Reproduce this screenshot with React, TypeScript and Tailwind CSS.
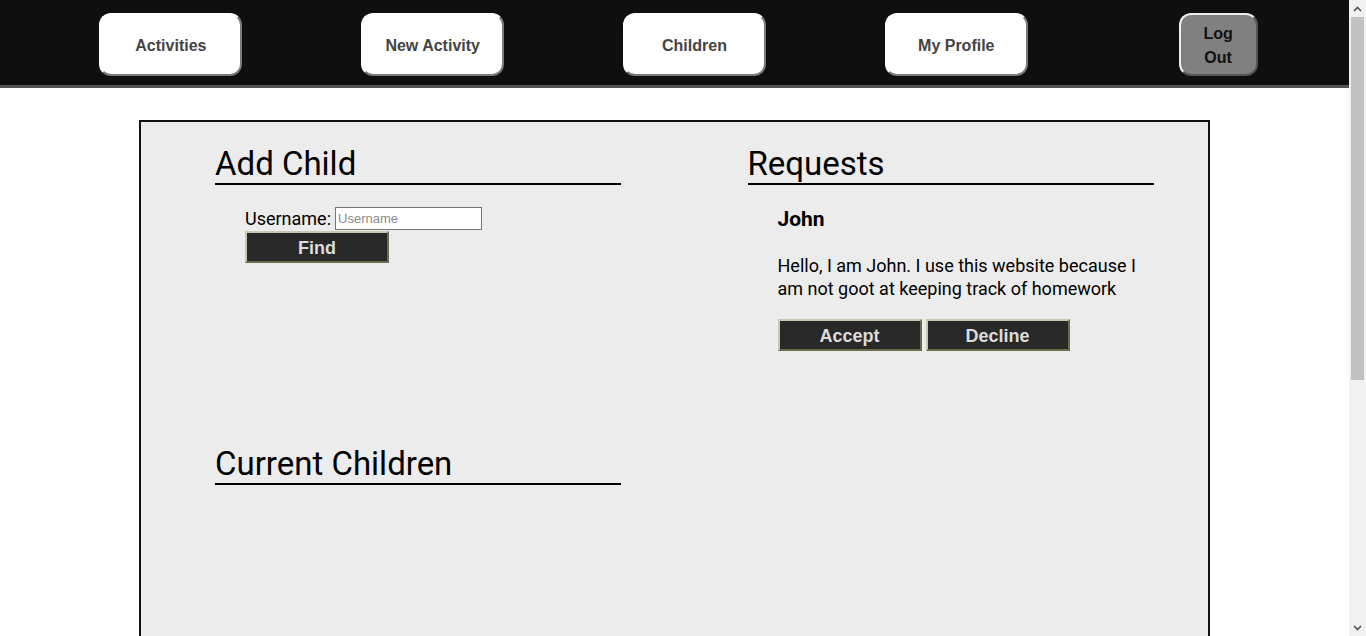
const navItems = ["Activities", "New Activity", "Children", "My Profile"];

function NavButton({ label }: { label: string }) {
  return (
    <div className="flex justify-center">
      <button className="h-[63px] w-[143px] rounded-[12px] border-2 border-t-white border-l-white border-r-[#7a7a7a] border-b-[#7a7a7a] bg-white pt-[3px] text-[16px] font-bold text-[#444] font-['Liberation_Sans',Arial,sans-serif]">
        {label}
      </button>
    </div>
  );
}

function DarkButton({ label }: { label: string }) {
  return (
    <button className="h-[32px] w-[144px] border-2 border-t-[#c8c8ae] border-l-[#c8c8ae] border-r-[#6b6b4c] border-b-[#6b6b4c] bg-[#282828] pt-[1px] text-[18px] font-bold leading-none text-[#dcdcdc] font-['Liberation_Sans',Arial,sans-serif]">
      {label}
    </button>
  );
}

function Heading({ children, className = "" }: { children: string; className?: string }) {
  return (
    <h2 className={`w-[406px] border-b-2 border-black pb-[1px] pt-[1px] text-[33px] leading-[37px] text-black ${className}`}>
      {children}
    </h2>
  );
}

function Scrollbar() {
  return (
    <div className="fixed right-0 top-0 flex h-screen w-[17px] flex-col bg-[#f1f1f1]">
      <div className="flex h-[17px] items-center justify-center">
        <svg width="9" height="6" viewBox="0 0 9 6">
          <path d="M1 5 L4.5 1.5 L8 5" fill="none" stroke="#505050" strokeWidth="1.6" />
        </svg>
      </div>
      <div className="mx-[2px] h-[363px] bg-[#c1c1c1]" />
      <div className="flex-1" />
      <div className="flex h-[17px] items-center justify-center">
        <svg width="9" height="6" viewBox="0 0 9 6">
          <path d="M1 1 L4.5 4.5 L8 1" fill="none" stroke="#505050" strokeWidth="1.6" />
        </svg>
      </div>
    </div>
  );
}

export default function App() {
  return (
    <div className="min-h-screen bg-white font-['Roboto',sans-serif] text-black">
      <div className="w-[1349px]">
        <header className="h-[88px] border-b-[3px] border-[#555] bg-[#0f0f0f] pt-[13px]">
          <nav className="grid grid-cols-5 pl-[40px]">
            {navItems.map((item) => (
              <NavButton key={item} label={item} />
            ))}
            <div className="flex justify-center">
              <button className="h-[63px] w-[79px] rounded-[12px] border-2 border-t-[#eee] border-l-[#eee] border-r-[#555] border-b-[#555] bg-[#808080] pt-[3px] text-[16px] font-bold leading-[24px] text-[#111] font-['Liberation_Sans',Arial,sans-serif]">
                Log
                <br />
                Out
              </button>
            </div>
          </nav>
        </header>

        <main className="mx-auto mb-[24px] mt-[32px] min-h-[900px] w-[1071px] border-2 border-[#111] bg-[#ececec]">
          <div className="grid grid-cols-2">
            <section className="pl-[74px] pt-[22px]">
              <Heading>Add Child</Heading>
              <div className="mt-[22px] pl-[30px]">
                <div className="flex h-[23px] items-center gap-[4px]">
                  <label className="text-[18px] leading-[23px]">Username:</label>
                  <input
                    placeholder="Username"
                    className="h-[23px] w-[147px] border border-[#767676] bg-white px-[2px] text-[13px] text-black placeholder:text-[#8a8a8a] font-['Liberation_Sans',Arial,sans-serif] outline-none"
                  />
                </div>
                <div className="mt-[1px]">
                  <DarkButton label="Find" />
                </div>
              </div>
              <Heading className="mt-[181px]">Current Children</Heading>
            </section>

            <section className="pt-[22px]">
              <div className="pl-[73px]">
                <Heading>Requests</Heading>
                <div className="w-[406px] pl-[30px]">
                  <div className="mt-[22px] text-[21px] font-bold leading-[25px]">John</div>
                  <p className="mt-[22px] text-[18px] leading-[23px]">
                    Hello, I am John. I use this website because I am not goot at keeping track of homework
                  </p>
                  <div className="mt-[19px] flex gap-[4px]">
                    <DarkButton label="Accept" />
                    <DarkButton label="Decline" />
                  </div>
                </div>
              </div>
            </section>
          </div>
        </main>
      </div>
      <Scrollbar />
    </div>
  );
}
